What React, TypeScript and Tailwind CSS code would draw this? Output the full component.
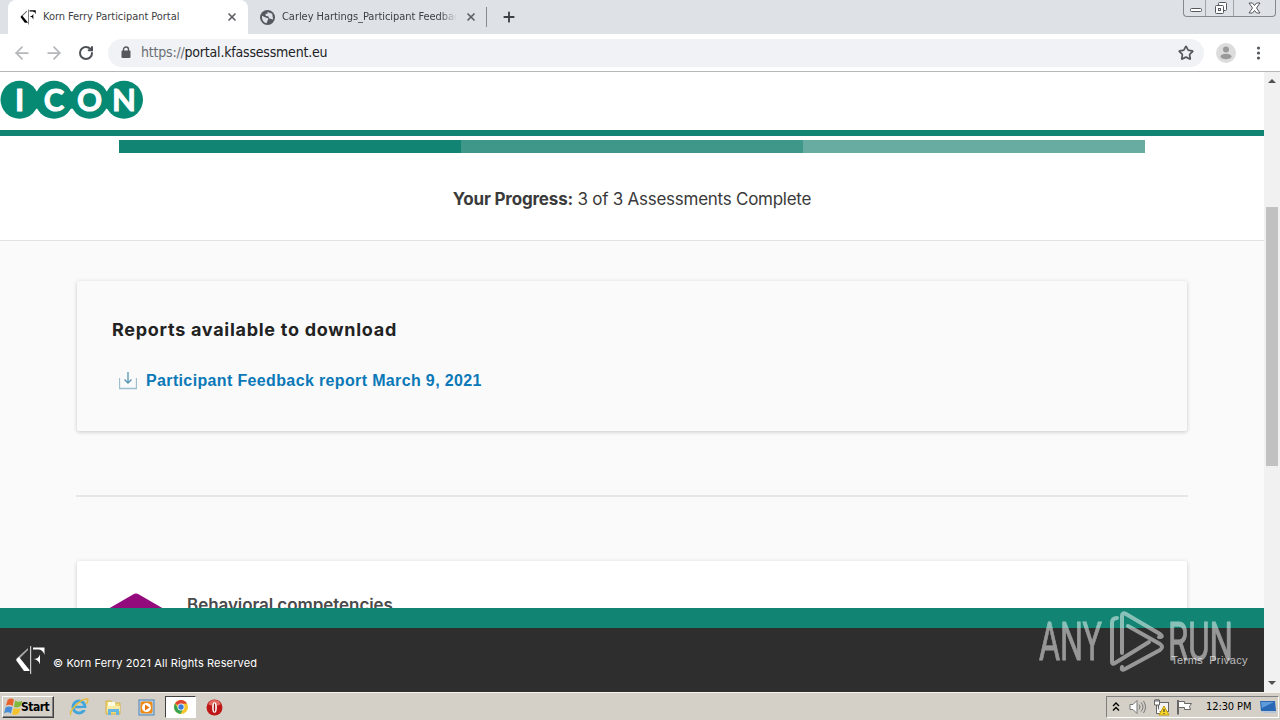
import type { ReactNode } from "react";
import { ArrowLeft, ArrowRight, Plus, RotateCw, Star, X } from "lucide-react";

const PROGRESS_COLORS = ["bg-[#128473]", "bg-[#3f978a]", "bg-[#68aba1]"];

const ICON_LETTERS = [
  { letter: "I", x: 19.5 },
  { letter: "C", x: 54 },
  { letter: "O", x: 89.5 },
  { letter: "N", x: 124 },
];

export default function App() {
  return (
    <div className="relative flex h-[720px] w-[1280px] flex-col overflow-hidden bg-white">
      <TabStrip />
      <Toolbar />
      <div className="flex h-[620px]">
        <main className="flex w-[1264px] flex-col">
          <PortalHeader />
          <PortalContent />
          <PortalFooter />
        </main>
        <Scrollbar />
      </div>
      <Taskbar />
      <Watermark />
    </div>
  );
}

function TabStrip() {
  return (
    <div className="flex h-[34px] bg-[#dee1e6] font-['DejaVu_Sans_Condensed','DejaVu_Sans',sans-serif] text-[11px] text-[#3c4043]">
      <div className="ml-2 flex w-[240px] items-center rounded-t-lg bg-white pr-[10px] pl-3">
        <KfLogo className="h-4 w-4 text-black" />
        <span className="ml-[7px] flex-1 whitespace-nowrap tracking-[-0.05px]">Korn Ferry Participant Portal</span>
        <X className="h-3 w-3 text-[#5f6368]" strokeWidth={3.4} />
      </div>
      <div className="flex w-[238px] items-center pr-[9px] pl-3">
        <GlobeIcon />
        <span className="ml-[7px] w-[175px] overflow-hidden mask-r-from-90% whitespace-nowrap tracking-[-0.05px]">
          Carley Hartings_Participant Feedback
        </span>
        <X className="ml-auto h-3 w-3 text-[#5f6368]" strokeWidth={3.4} />
      </div>
      <div className="mt-[7px] h-5 w-px bg-[#85888d]" />
      <Plus className="mt-[9px] ml-[14px] h-4 w-4 text-[#3c4043]" strokeWidth={2.8} />
      <WindowControls />
    </div>
  );
}

function WindowControls() {
  return (
    <div className="mr-1 ml-auto flex h-[17px] rounded-b border border-t-0 border-[#85898f]">
      <svg width="91" height="16" viewBox="0 0 91 16" fill="none" stroke="#55595f">
        <path d="M21.5 0v16M49.500 0v16" stroke="#a2a5aa" />
        <rect x="6.500" y="8.500" width="11" height="3" rx="1" fill="#fff" />
        <rect x="34.500" y="2.500" width="8" height="8" rx="1" fill="#fff" />
        <rect x="31.500" y="5.500" width="8" height="8" rx="1" fill="#fff" />
        <rect x="34.500" y="8.500" width="2" height="2" />
        <path d="M65 3h3.500l2 2.500L72.500 3H76l-3.500 5 3.500 5h-3.500l-2-2.500-2 2.500H65l3.500-5z" fill="#fff" />
      </svg>
    </div>
  );
}

function Toolbar() {
  return (
    <div className="flex h-[38px] items-center border-b border-[#b5b6b7] bg-white font-['DejaVu_Sans_Condensed','DejaVu_Sans',sans-serif]">
      <ArrowLeft className="ml-3 h-5 w-5 text-[#b4b6b9]" strokeWidth={2.1} />
      <ArrowRight className="ml-3 h-5 w-5 text-[#b4b6b9]" strokeWidth={2.1} />
      <RotateCw className="ml-[14px] h-4 w-4 text-[#4d5156]" strokeWidth={3} />
      <div className="ml-[14px] flex h-7 w-[1096px] items-center rounded-full bg-[#f0f2f5] pr-[10px] pl-[13px]">
        <LockIcon />
        <span className="ml-[10px] text-[14px] tracking-[-0.2px] text-[#202124]">
          <span className="text-[#6a6e73]">https://</span>portal.kfassessment.eu
        </span>
        <Star className="ml-auto h-4 w-4 text-[#55595e]" strokeWidth={2.6} />
      </div>
      <svg className="ml-3" width="20" height="20" viewBox="0 0 20 20">
        <circle cx="10" cy="10" r="10" fill="#dcdcdc" />
        <circle cx="10" cy="6.500" r="3" fill="#9a9a9a" />
        <ellipse cx="10" cy="13.500" rx="5.500" ry="2.800" fill="#9a9a9a" />
      </svg>
      <svg className="ml-5" width="5" height="16" viewBox="0 0 5 16" fill="#55595e">
        <circle cx="2.500" cy="3" r="1.600" />
        <circle cx="2.500" cy="8" r="1.600" />
        <circle cx="2.500" cy="13" r="1.600" />
      </svg>
    </div>
  );
}

function PortalHeader() {
  return (
    <header className="h-16 shrink-0 border-b-[6px] border-[#128473] bg-white pt-[7px]">
      <svg width="145" height="42" viewBox="0 0 145 42" fill="#068a74">
        <path d="M34 11q3 3 6 0v20q-3-3-6 0zM69 11q3 3 6 0v20q-3-3-6 0zM103 11q3 3 6 0v20q-3-3-6 0z" />
        {ICON_LETTERS.map(({ letter, x }) => (
          <circle key={letter} cx={x} cy="20.800" r="19" />
        ))}
        <g fill="#fff" stroke="#fff" strokeWidth="1" strokeLinejoin="round" className="font-['Lato',sans-serif] text-[31px] font-bold">
          {ICON_LETTERS.map(({ letter, x }) => (
            <text key={letter} x={x} y="32" textAnchor="middle">
              {letter}
            </text>
          ))}
        </g>
      </svg>
    </header>
  );
}

function PortalContent() {
  return (
    <div className="h-[472px] overflow-hidden bg-[#fafafa] font-['Inter',sans-serif]">
      <section className="h-[105px] border-b border-[#e2e2e2] bg-white pt-1">
        <div className="mx-auto flex h-[13px] w-[1026px]">
          {PROGRESS_COLORS.map((color) => (
            <div key={color} className={`flex-1 ${color}`} />
          ))}
        </div>
        <p className="mt-[34px] text-center text-[17px] leading-6 tracking-[-0.26px] text-[#3a3a3a]">
          <b className="tracking-[-0.17px]">Your Progress:</b> 3 of 3 Assessments Complete
        </p>
      </section>
      <div className="px-[77px] pt-10">
        <Card className="h-[150px] bg-[#fafafa] px-[35px] pt-[37px]">
          <h2 className="text-[18px] leading-6 font-bold tracking-[0.72px] text-[#222]">
            Reports available to download
          </h2>
          <a className="mt-[27px] flex items-center text-[#0b78b8]">
            <DownloadIcon />
            <span className="font-['Liberation_Sans',sans-serif] text-base font-bold tracking-[0.36px]">
              Participant Feedback report March 9, 2021
            </span>
          </a>
        </Card>
        <hr className="-mx-px mt-16 mb-16 border-t-2 border-[#e6e6e6]" />
        <Card className="flex h-[150px] bg-white pt-8 pl-[29px]">
          <svg width="60" height="60" viewBox="0 0 60 60" fill="#930a7d">
            <path d="M27 1.500Q30 -.5 33 1.500L58 16v30L30 60 2 46V16z" />
          </svg>
          <h3 className="ml-[21px] text-[17px] leading-6 font-semibold tracking-[-0.06px] text-[#4a4a4a]">
            Behavioral competencies
          </h3>
        </Card>
      </div>
    </div>
  );
}

function Card({ children, className }: { children: ReactNode; className: string }) {
  return <div className={`rounded-xs shadow-[0_1px_4px_rgba(0,0,0,0.2)] ${className}`}>{children}</div>;
}

function PortalFooter() {
  return (
    <footer className="flex h-[84px] items-center justify-between border-t-20 border-[#128473] bg-[#2e2e2e] pr-4 pl-[15px] font-['Inter',sans-serif] text-[11px] text-white">
      <div className="flex items-center">
        <KfLogo className="h-[30px] w-[30px]" />
        <span className="mt-[7px] ml-2 tracking-[0.13px]">© Korn Ferry 2021 All Rights Reserved</span>
      </div>
      <div className="flex gap-[6px] font-['Liberation_Sans',sans-serif] tracking-[0.4px] text-[#bdbdbd]">
        <a>Terms</a>
        <a>Privacy</a>
      </div>
    </footer>
  );
}

function Scrollbar() {
  return (
    <div className="flex w-4 flex-col items-center justify-between bg-[#f1f1f1] py-[6px]">
      <svg width="8" height="5" viewBox="0 0 8 5"><path d="M0 5l4-4 4 4z" fill="#505050" /></svg>
      <div className="mt-auto mb-[215px] h-[259px] w-3 bg-[#c1c1c1]" />
      <svg width="8" height="5" viewBox="0 0 8 5"><path d="M0 0l4 4 4-4z" fill="#505050" /></svg>
    </div>
  );
}

function Taskbar() {
  return (
    <div className="flex h-7 items-center border-t border-[#f5f3ee] bg-[#d4d0c8] pt-px pl-[2px] font-['DejaVu_Sans_Condensed','DejaVu_Sans',sans-serif] text-[11px] text-black">
      <div className="flex h-[22px] w-[52px] items-center border border-t-white border-r-[#404040] border-b-[#404040] border-l-white pl-px shadow-[inset_-1px_-1px_0_#808080]">
        <WindowsFlag />
        <b className="-ml-px text-[12px] tracking-[-0.5px]">Start</b>
      </div>
      <svg className="ml-[15px]" width="20" height="20" viewBox="0 0 20 20" fill="none">
        <circle cx="10" cy="10" r="6" stroke="#42a5dc" strokeWidth="3" />
        <path d="M5 10h11" stroke="#42a5dc" strokeWidth="2.500" />
        <path d="M12 12h7" stroke="#d4d0c8" strokeWidth="2" />
        <path d="M2 18C-1 14 13 1 18 2c2 1 0 4-1 5" stroke="#e5bd3d" strokeWidth="1.500" />
      </svg>
      <svg className="ml-[15px]" width="18" height="18" viewBox="0 0 18 18">
        <path d="M2 3h5l1 2h8v11H2z" fill="#efd878" stroke="#d3b348" />
        <path d="M4 4h7v4H4z" fill="#fffbe0" />
        <path d="M3 8h13v5H3z" fill="#f8eba5" />
        <path d="M4 17v-6h11v6h-3v-3H7v3z" fill="#66b6e2" />
      </svg>
      <svg className="ml-4" width="17" height="17" viewBox="0 0 17 17">
        <rect x="1" y="1" width="15" height="15" fill="#b4d2ea" stroke="#4f83b8" />
        <rect x="2.500" y="2.500" width="12" height="12" rx="2" fill="#f08a16" />
        <circle cx="8.500" cy="8.500" r="4.500" fill="#fff" />
        <path d="M7 5.500v6l4.500-3z" fill="#e8740e" />
      </svg>
      <div className="ml-[10px] flex h-[22px] w-[31px] items-center justify-center border border-t-[#404040] border-r-white border-b-white border-l-[#404040] bg-white">
        <svg width="14" height="14" viewBox="0 0 14 14">
          <circle cx="7" cy="7" r="7" fill="#f4c629" />
          <path d="M7 7L1 3.500A7 7 0 0 1 13 3.500L7 4z" fill="#df4535" />
          <path d="M1 3.500A7 7 0 0 0 6.500 14L9 9 4 8z" fill="#35a350" />
          <circle cx="7" cy="7" r="3.500" fill="#fff" />
          <circle cx="7" cy="7" r="2.700" fill="#3d7bd9" />
        </svg>
      </div>
      <svg className="ml-[10px]" width="17" height="17" viewBox="0 0 16 16">
        <circle cx="8" cy="8" r="7.500" fill="#bf1717" />
        <path d="M2 5a6.500 6.500 0 0 1 12 0q-6 3-12 0" fill="#e26a62" />
        <ellipse cx="8" cy="8" rx="2.200" ry="5" fill="#fff" />
        <ellipse cx="8" cy="8" rx=".7" ry="4" fill="#9e1010" />
      </svg>
      <div className="mr-px ml-auto flex h-[22px] w-[173px] items-center border border-t-[#808080] border-r-white border-b-white border-l-[#808080] pl-[5px]">
        <svg width="8" height="12" viewBox="0 0 8 12" fill="none" stroke="#000" strokeWidth="1.400">
          <path d="M1 5l3-3 3 3M1 9.500l3-3 3 3" />
        </svg>
        <svg className="ml-[9px]" width="17" height="16" viewBox="0 0 17 16" fill="none" stroke="#777">
          <path d="M1 5.500h3l4-4v13l-4-4H1z" fill="#fff" />
          <path d="M10 5.500q2 2.500 0 5M12 3.500q4 4.500 0 9M14.500 2q4 6 0 12" />
        </svg>
        <svg className="ml-[7px]" width="17" height="17" viewBox="0 0 17 17" fill="none" stroke="#666">
          <rect x="5.500" y="3.500" width="10" height="9" fill="#f4f4f4" />
          <path d="M1.500 1v5h5V1zM3.500 6v8.500h4" fill="#fff" />
          <path d="M3 0v3M5 0v3" />
          <path d="M11 7l5 9H6z" fill="#f9d72b" stroke="#c29c12" />
          <path d="M11 10v3M11 14v1" stroke="#222" />
        </svg>
        <svg className="ml-[6px]" width="17" height="16" viewBox="0 0 17 16" stroke="#666">
          <path d="M2 1v14.500" strokeWidth="2" />
          <path d="M2.500 2.500h6v2h7l-2 3 1 3h-6v-2h-6z" fill="#fff" />
        </svg>
        <span className="ml-[13px] whitespace-nowrap tracking-[-0.1px]">12:30 PM</span>
        <svg className="mr-[2px] ml-auto" width="16" height="14" viewBox="0 0 16 14">
          <path d="M0 1h15l1 10H1z" fill="#2868b5" />
          <path d="M1 2h13L2 8z" fill="#5e9bdb" />
          <path d="M1 11h15v2H4z" fill="#b5c5d6" />
        </svg>
      </div>
    </div>
  );
}

function Watermark() {
  return (
    <svg
      className="absolute top-[606px] left-[1034px] opacity-50"
      width="202"
      height="70"
      viewBox="0 0 202 70"
      fill="none"
      stroke="#fff"
      strokeWidth="4"
      strokeLinecap="round"
      strokeLinejoin="round"
    >
      <g fill="#fff" strokeWidth=".9" className="font-['Roboto',sans-serif] text-[53px] font-normal">
        <text x="5" y="54" textLength="63" lengthAdjust="spacingAndGlyphs">ANY</text>
        <text x="134" y="54" textLength="65" lengthAdjust="spacingAndGlyphs">RUN</text>
      </g>
      <path d="M83 12q-5 0-5 5v39q0 3 3 1l34-21" />
      <path d="M88 47V10q0-4 4-2l34 20q4 3-1 3" />
      <path d="M94 20l32 18q4 3 0 6L91 63q-4 2-3-2" />
    </svg>
  );
}

function KfLogo({ className }: { className: string }) {
  return (
    <svg className={className} viewBox="0 0 30 30" fill="currentColor">
      <path d="M13 3L1 14l2 1L13 5z" opacity=".6" />
      <path d="M4 12L1 15l8 11h5.500V25z" />
      <path d="M15 1h1.200v28H15z" opacity=".75" />
      <path d="M18 2.500h11.500V10q-1.500-5-5.500-5.500h-6zM18.500 14q5 0 6.500-4.500v10q-1.500-5-6.500-5.500z" />
    </svg>
  );
}

function GlobeIcon() {
  return (
    <svg width="15" height="15" viewBox="0 0 16 16">
      <circle cx="8" cy="8" r="8" fill="#55595f" />
      <path d="M2 6l4 2 3 1-2 5Q2 13 2 6M8 2l5 2 1 6-4-1-1-2-3-1V4h2z" fill="#dee1e6" />
    </svg>
  );
}

function LockIcon() {
  return (
    <svg width="10" height="13" viewBox="0 0 10 13">
      <path d="M2.500 5V3.500a2.500 2.500 0 0 1 5 0V5" fill="none" stroke="#55595e" strokeWidth="1.400" />
      <rect x=".5" y="4.500" width="9" height="7.500" rx="1" fill="#55595e" />
    </svg>
  );
}

function DownloadIcon() {
  return (
    <svg className="mr-[9px] ml-[7px]" width="18" height="18" viewBox="0 0 18 18" fill="none">
      <path d="M.5 6v10.500h17V6" stroke="#9dc0cf" strokeWidth="1.300" />
      <path d="M9 0v11M5.500 7.500L9 11l3.500-3.500" stroke="#5795b5" strokeWidth="1.300" />
    </svg>
  );
}

function WindowsFlag() {
  return (
    <svg width="18" height="18" viewBox="1 1.500 14.500 14.500">
      <path d="M4 3q3-2 5 0L8 8Q5 6 2.500 8z" fill="#e8632c" />
      <path d="M10 3.500q3 2 6 0L14.500 8q-3 2-5.500.5z" fill="#80b93c" />
      <path d="M2.300 9Q5 7.500 7.800 9l-1.300 5Q4 12 1 14z" fill="#488cd8" />
      <path d="M8.800 9.500q3 1.500 5.500 0L13 14q-3 2-5.500.5z" fill="#f3c32e" />
    </svg>
  );
}
